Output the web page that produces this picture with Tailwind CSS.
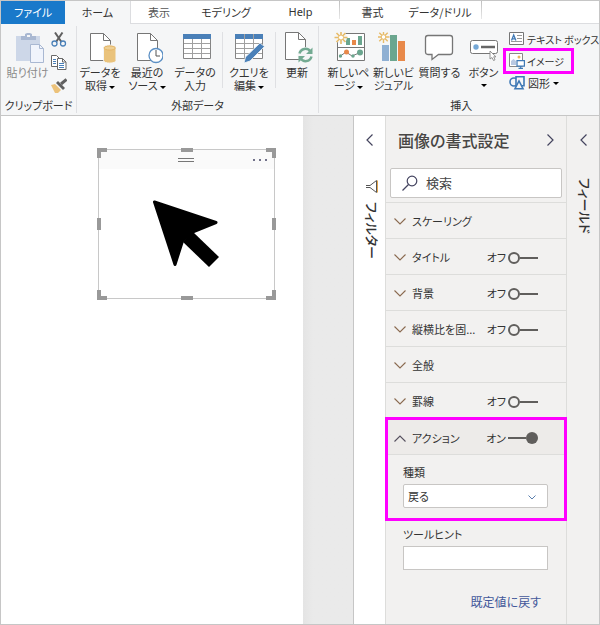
<!DOCTYPE html>
<html lang="ja">
<head>
<meta charset="utf-8">
<meta name="viewport" content="width=device-width, initial-scale=1">
<title>レポート</title>
<script src="https://cdn.jsdelivr.net/npm/@tailwindcss/browser@4"></script>
</head>
<body class="flex min-h-screen flex-col border border-[#c6c6c6] bg-white font-['Noto_Sans_CJK_JP',sans-serif] text-[11px] leading-[13px] text-[#333] [font-feature-settings:'palt'] whitespace-nowrap">

<!-- Ribbon tabs -->
<nav class="flex h-[23px] text-center leading-[22px]">
  <a href="#" class="w-16 shrink-0 bg-[#1979ca] text-white">ファイル</a>
  <a href="#" class="w-[66px] shrink-0 border-r border-[#dcdde0] bg-[#f5f6f7]">ホーム</a>
  <div class="flex grow border-b border-[#dcdde0]">
    <a href="#" class="w-14 text-[#555]">表示</a>
    <a href="#" class="w-[78px]">モデリング</a>
    <a href="#" class="w-[74px] pr-[3px] font-['Noto_Sans',sans-serif]">Help</a>
    <div class="h-[18px] w-px bg-linear-to-b from-[#c0c0c0] to-[#e8e8e8]"></div>
    <a href="#" class="w-[65px]">書式</a>
    <a href="#" class="w-[76px] pr-[6px]">データ/ドリル</a>
    <div class="h-[18px] w-px bg-linear-to-b from-[#c0c0c0] to-[#e8e8e8]"></div>
  </div>
</nav>

<!-- Ribbon -->
<header class="flex h-[92px] border-b border-[#c6c6c6] bg-[#f5f6f7] py-[2px]">
  <section class="flex w-[76px] shrink-0 flex-col border-r border-[#dfe0e3]">
    <div class="flex grow pt-[6px] pl-[5px]">
      <button class="flex w-[43px] flex-col items-center gap-[2px] text-[#8a8a8a]">
        <svg class="h-8 w-8" viewBox="0 0 32 32"><path fill="#cdd7e8" d="M4 4h24v25H4z"/><path fill="#a9b8d2" d="M9 4h4V2l2-1h3l2 1v2h4v4H9z"/><path fill="#f5f6f7" d="M15 3h3v2h-3z"/><path fill="#f0f4fc" stroke="#a9b8d2" d="M18.500 12.500h9l4 4v14h-13z"/><path fill="none" stroke="#a9b8d2" d="M27.500 12.500v4h4"/></svg>
        <span>貼り付け</span>
      </button>
      <div class="flex w-5 flex-col items-center gap-[7px]">
        <button aria-label="切り取り"><svg class="h-4 w-4" viewBox="0 0 16 16" fill="none"><path stroke="#606060" stroke-width="2" d="M4 0.500l6.500 9.500M11.500 0.500L5 10"/><circle cx="3.500" cy="11.500" r="2.500" stroke="#4a80b8" stroke-width="1.300"/><circle cx="12" cy="11.500" r="2.500" stroke="#4a80b8" stroke-width="1.300"/></svg></button>
        <button aria-label="コピー"><svg class="h-4 w-4" viewBox="0 0 16 16" fill="#fff" stroke="#686868"><path d="M.5.5h5l3 3v8h-8z"/><path stroke="#4a80b8" d="M2 4.500h3M2 6.500h3M2 8.500h3"/><path d="M6.500 3.500h5l3.500 3.500v7.500H6.500z"/><path d="M11.500 3.500V7H15" fill="none"/><path stroke="#4a80b8" d="M8 8.500h5M8 10.500h5M8 12.500h5"/></svg></button>
        <button aria-label="書式のコピー"><svg class="h-4 w-4" viewBox="0 0 16 16"><path fill="#ecc27a" d="M0 7l4-1 6 6-3 3H4z"/><path fill="#606060" d="M5 5l2-2 7 7-2 2z"/><path stroke="#606060" stroke-width="3" d="M10 6l5.500-4.500"/></svg></button>
      </div>
    </div>
    <h2 class="pb-px text-center">クリップボード</h2>
  </section>

  <section class="flex w-[242px] shrink-0 flex-col border-r border-[#dfe0e3]">
    <div class="flex grow pt-[6px]">
      <button class="flex w-[46px] flex-col items-center gap-[2px]">
        <svg class="h-8 w-8" viewBox="0 0 32 32"><path fill="#fff" stroke="#767676" d="M6.500 1.500h13l7 7v20h-20z"/><path fill="none" stroke="#767676" d="M19.500 1.500v7h7"/><path fill="#eac37c" stroke="#f5f6f7" d="M19.500 16c0-4 12.500-4 12.500 0v12.500c0 3.500-12.500 3.500-12.500 0z"/><ellipse cx="25.700" cy="16" rx="5.700" ry="2" fill="#efd093" stroke="#dfac5a" stroke-width=".7"/></svg>
        <span>データを<br>取得<svg class="ml-[2px] inline h-[3px] w-[6px] align-middle" viewBox="0 0 6 3"><path d="M0 0h6L3 3z"/></svg></span>
      </button>
      <button class="flex w-12 flex-col items-center gap-[2px]">
        <svg class="h-8 w-8" viewBox="0 0 32 32"><path fill="#fff" stroke="#767676" d="M6.500 1.500h13l7 7v20h-20z"/><path fill="none" stroke="#767676" d="M19.500 1.500v7h7"/><circle cx="25" cy="23.500" r="7" fill="#fff" stroke="#5b8fc4" stroke-width="1.300"/><path fill="none" stroke="#555" d="M25 18v6h4"/></svg>
        <span>最近の<br>ソース<svg class="ml-[2px] inline h-[3px] w-[6px] align-middle" viewBox="0 0 6 3"><path d="M0 0h6L3 3z"/></svg></span>
      </button>
      <button class="flex w-12 flex-col items-center gap-[2px]">
        <svg class="h-8 w-8" viewBox="0 0 32 32"><path fill="#fff" stroke="#858585" d="M4.500 2.500h27v24h-27z"/><path fill="#4a80b8" d="M4 2h28v5H4z"/><path fill="none" stroke="#a0a0a0" d="M5 11.500h26M5 16.500h26M5 21.500h26M13.500 7v19M22.500 7v19"/></svg>
        <span>データの<br>入力</span>
      </button>
      <div class="mx-[3px] h-14 w-px bg-[#dfe0e3]"></div>
      <button class="flex w-[46px] flex-col items-center gap-[2px]">
        <svg class="h-8 w-8" viewBox="0 0 32 32"><path fill="#fff" stroke="#858585" d="M2.500 2.500h27v24h-27z"/><path fill="#4a80b8" d="M2 2h28v5H2z"/><path fill="none" stroke="#a0a0a0" d="M3 11.500h26M3 16.500h26M3 21.500h26M11.500 2v24M20.500 2v24"/><path fill="#4a80b8" stroke="#f5f6f7" stroke-width=".8" d="M11 31l1.500-6L27 11l4.500 3.500L17 29z"/></svg>
        <span>クエリを<br>編集<svg class="ml-[2px] inline h-[3px] w-[6px] align-middle" viewBox="0 0 6 3"><path d="M0 0h6L3 3z"/></svg></span>
      </button>
      <div class="mx-[3px] h-14 w-px bg-[#dfe0e3]"></div>
      <button class="flex w-9 flex-col items-center gap-[2px]">
        <svg class="h-8 w-8" viewBox="0 0 32 32"><path fill="#fff" stroke="#767676" d="M4.500 .5h13l7 7v20h-20z"/><path fill="none" stroke="#767676" d="M17.500 .5v7h7"/><circle cx="24.500" cy="23" r="8" fill="#f5f6f7"/><path fill="none" stroke="#73aa92" stroke-width="2.500" d="M18.500 21.500c1.500-5.500 8-6 11-2M30.500 24.500c-1.500 5.500-8 6-11 2"/><path fill="#73aa92" d="M31.500 15.500v6.500h-6.500zM17.500 30.500V24H24z"/></svg>
        <span>更新</span>
      </button>
    </div>
    <h2 class="pb-px text-center">外部データ</h2>
  </section>

  <section class="flex grow flex-col">
    <div class="flex grow pt-[6px] pl-[6px]">
      <button class="flex w-[47px] flex-col items-center gap-[2px]">
        <svg class="h-8 w-8" viewBox="0 0 32 32"><path fill="#fff" stroke="#767676" d="M4.500 1.500h27v27h-27z"/><path stroke="#767676" d="M5 15.500h26"/><path fill="#6ba68f" d="M13 6h4v7h-4zM25 4h4v9h-4z"/><path fill="#e8894a" d="M19 8h4v5h-4z"/><path fill="none" stroke="#767676" d="M6 25l7-5 6 4 7-3 3-1"/><circle cx="7.500" cy="24" r="1.700" fill="#6ba68f"/><circle cx="13.500" cy="20" r="2.500" fill="#e8894a"/><circle cx="20" cy="24" r="1.700" fill="#6ba68f"/><circle cx="27" cy="20.500" r="3" fill="#6ba68f"/><circle cx="8" cy="5.500" r="6" fill="#f5f6f7"/><path stroke="#e7bb68" stroke-width="1.600" d="M8-1v13M1.500 5.500h13M3.500 1l9 9M12.500 1l-9 9"/><circle cx="8" cy="5.500" r="2.500" fill="#fff" stroke="#e7bb68"/></svg>
        <span>新しいペ<br>ージ<svg class="ml-[2px] inline h-[3px] w-[6px] align-middle" viewBox="0 0 6 3"><path d="M0 0h6L3 3z"/></svg></span>
      </button>
      <button class="flex w-[43px] flex-col items-center gap-[2px]">
        <svg class="h-8 w-8" viewBox="0 0 32 32"><path fill="#8fb0d3" d="M4 13h7v16H4z"/><path fill="#6ba68f" d="M12 3h7v26h-7z"/><path fill="#e8894a" d="M20 9h7v20h-7z"/><path stroke="#e7bb68" stroke-width="1.400" d="M5.500-1v12M0 5h11.500M1.300.8l8.400 8.400M9.700.8L1.300 9.200"/><circle cx="5.500" cy="5" r="2.300" fill="#fff" stroke="#e7bb68"/></svg>
        <span>新しいビ<br>ジュアル</span>
      </button>
      <button class="flex w-[49px] flex-col items-center gap-[2px]">
        <svg class="h-8 w-8" viewBox="0 0 32 32"><path fill="#fff" stroke="#767676" stroke-width="1.300" d="M4 3.500h22q2.500 0 2.500 2.500v14q0 2.500-2.500 2.500H14.500L8 27.500v-5H4q-2.500 0-2.500-2.500V6q0-2.500 2.500-2.500z"/></svg>
        <span>質問する</span>
      </button>
      <button class="flex w-[39px] flex-col items-center gap-[2px]">
        <svg class="h-8 w-8" viewBox="0 0 32 32"><rect x="2.500" y="8.500" width="27" height="13" rx="2" fill="#fff" stroke="#767676"/><circle cx="8" cy="15" r="2.700" fill="#74a7d6"/><path stroke="#666" stroke-width="2.500" d="M13 15h14"/><path fill="#fff" stroke="#888" stroke-width=".9" d="M22 19v8l2-1.500 1.500 3 1.500-.7-1.300-3H28z"/></svg>
        <span class="flex flex-col items-center">ボタン<svg class="mt-[5px] h-[3px] w-[6px]" viewBox="0 0 6 3"><path d="M0 0h6L3 3z"/></svg></span>
      </button>
      <div class="-mt-1 flex flex-col items-start pl-[2px]">
        <button class="flex h-[22px] items-center gap-[2px] px-1 text-[10px]"><svg class="h-4 w-4" viewBox="0 0 16 16"><path fill="#fff" stroke="#767676" d="M.5 1.500h14v12H.5z"/><path fill="none" stroke="#3f79b5" stroke-width="1.300" d="M2.500 9.500l2.200-5.500 2.200 5.500M3.200 7.800h3"/><path stroke="#999" d="M8 4.500h5M8 7.500h5M2 10.500h11"/></svg>テキスト ボックス</button>
        <button class="flex h-[22px] items-center gap-[2px] px-1 text-[10px] outline-3 -outline-offset-1 outline-[#ff00ff]"><svg class="h-4 w-4" viewBox="0 0 16 16"><path fill="#fff" stroke="#888" d="M.5.5h13v13H.5z"/><circle cx="10" cy="4" r="1.500" fill="#e9b45e"/><path fill="#b9c9e2" d="M2 12V8l2.500-2L7 8v4z"/><path fill="#fff" stroke="#3f79b5" stroke-width="1.200" d="M8 7.600h7.400v5.600H8z"/><path stroke="#3f79b5" stroke-width="1.200" d="M11.700 13v2.500M9.500 15.400h4.500"/></svg><span class="pr-1">イメージ</span></button>
        <button class="flex h-[22px] items-center gap-[3px] px-1"><svg class="h-4 w-4" viewBox="0 0 16 16"><circle cx="5" cy="7" r="4" fill="none" stroke="#3f79b5" stroke-width="1.600"/><path fill="#f5f6f7" stroke="#3f79b5" stroke-width="1.600" d="M7 1.800h8v9H7z"/><path fill="#f5f6f7" stroke="#3f79b5" stroke-width="1.600" d="M6 13.700h8L10 6z"/></svg>図形<svg class="h-[3px] w-[6px]" viewBox="0 0 6 3"><path d="M0 0h6L3 3z"/></svg></button>
      </div>
    </div>
    <h2 class="pb-px text-center">挿入</h2>
  </section>
</header>

<main class="flex grow">
  <!-- Report canvas -->
  <section class="relative grow bg-white" aria-label="キャンバス">
    <figure class="absolute top-[33px] left-[97px] h-[150px] w-[177px] border border-[#c8c8c8] bg-white">
      <div class="flex h-[19px] items-center bg-[#fafafa] pl-5">
        <svg class="mx-auto h-[6px] w-4" viewBox="0 0 16 6"><path stroke="#777" d="M0 1.500h16M0 4.500h16"/></svg>
        <button class="mr-[6px]" aria-label="その他のオプション"><svg class="h-[2px] w-[15px]" viewBox="0 0 15 2" fill="#72728a"><path d="M0 0h2v2H0zM6 0h2v2H6zM12 0h2v2h-2z"/></svg></button>
      </div>
      <svg class="mt-[30px] ml-[52px] h-[70px] w-[70px]" viewBox="0 0 70 70"><path stroke="#000" stroke-width="3" stroke-linejoin="round" d="M3.500 3L65 23.500 41.500 33 31.500 42 24 65.500z"/><path d="M32 43l10-10 26 25-10 10z"/></svg>
      <svg class="absolute -top-[2px] -left-[2px] h-[152px] w-[179px]" viewBox="0 0 179 152" fill="#999"><path d="M0 0h10v4H4v6H0zM169 0h10v10h-4V4h-6zM0 142h4v6h6v4H0zM175 142h4v10h-10v-4h6zM84 0h12v4H84zM84 148h12v4H84zM0 70h4v12H0zM175 70h4v12h-4z"/></svg>
    </figure>
  </section>
  <div class="w-[50px] shrink-0 bg-linear-to-r from-[#e4e4e4] to-[#eaeaea] to-20%"></div>

  <!-- Filters pane, collapsed -->
  <aside class="flex w-8 shrink-0 flex-col items-center border-l border-[#c6c6c6] bg-white pt-[18px]">
    <button aria-label="フィルター ペインを開く"><svg class="h-3 w-[7px]" viewBox="0 0 7 12" fill="none" stroke="#44445e" stroke-width="1.200"><path d="M6.500.5L1 6l5.500 5.500"/></svg></button>
    <svg class="mt-[34px] ml-1 h-[13px] w-3" viewBox="0 0 12 13" fill="none" stroke="#555"><path d="M0 5.500h4L10.500.5v12L4 7.500H0" /><path stroke="#e2a64e" d="M11.500.5v12"/></svg>
    <h2 class="mt-[9px] ml-1 text-[13px] leading-[18px] font-medium [text-orientation:sideways] [writing-mode:vertical-rl]">フィルター</h2>
  </aside>

  <!-- Format pane -->
  <aside class="w-[181px] shrink-0 border-l border-[#dddddb] bg-[#f2f1f0]">
    <div class="flex h-[52px] items-center justify-between pr-3 pb-1 pl-3">
      <h2 class="text-[16px] leading-5 font-medium text-[#484644]">画像の書式設定</h2>
      <button aria-label="閉じる"><svg class="h-3 w-[7px]" viewBox="0 0 7 12" fill="none" stroke="#44445e" stroke-width="1.200"><path d="M.5.5L6 6 .5 11.500"/></svg></button>
    </div>
    <label class="mx-1 mb-1 flex h-[30px] items-center gap-2 rounded-[2px] border border-[#c8c6c4] bg-white pl-[11px]">
      <svg class="h-4 w-4 shrink-0" viewBox="0 0 16 16" fill="none" stroke="#444460" stroke-width="1.200"><circle cx="10" cy="6" r="4.800"/><path d="M6.500 9.500L.5 15.500"/></svg>
      <input type="search" aria-label="検索" placeholder="検索" class="min-w-0 grow bg-transparent text-[13px] leading-4 placeholder:text-[#444] outline-none">
    </label>

    <div class="flex h-9 items-center border-t border-[#dddddb] pt-[2px] pr-7 pl-2"><button class="flex grow items-center gap-[6px]"><svg class="h-[7px] w-3" viewBox="0 0 12 7" fill="none" stroke="#8a6a50" stroke-width="1.100"><path d="M.5.5L6 6 11.500.5"/></svg>スケーリング</button></div>
    <div class="flex h-9 items-center border-t border-[#dddddb] pt-[2px] pr-7 pl-2"><button class="flex grow items-center gap-[6px]"><svg class="h-[7px] w-3" viewBox="0 0 12 7" fill="none" stroke="#8a6a50" stroke-width="1.100"><path d="M.5.5L6 6 11.500.5"/></svg>タイトル</button>
      <label class="flex items-center gap-[2px]">オフ<input type="checkbox" class="flex h-3 w-[30px] appearance-none items-center before:h-3 before:w-3 before:rounded-full before:border-2 before:border-[#605e5c] after:h-[2px] after:grow after:bg-[#605e5c]"></label></div>
    <div class="flex h-9 items-center border-t border-[#dddddb] pt-[2px] pr-7 pl-2"><button class="flex grow items-center gap-[6px]"><svg class="h-[7px] w-3" viewBox="0 0 12 7" fill="none" stroke="#8a6a50" stroke-width="1.100"><path d="M.5.5L6 6 11.500.5"/></svg>背景</button>
      <label class="flex items-center gap-[2px]">オフ<input type="checkbox" class="flex h-3 w-[30px] appearance-none items-center before:h-3 before:w-3 before:rounded-full before:border-2 before:border-[#605e5c] after:h-[2px] after:grow after:bg-[#605e5c]"></label></div>
    <div class="flex h-9 items-center border-t border-[#dddddb] pt-[2px] pr-7 pl-2"><button class="flex grow items-center gap-[6px]"><svg class="h-[7px] w-3" viewBox="0 0 12 7" fill="none" stroke="#8a6a50" stroke-width="1.100"><path d="M.5.5L6 6 11.500.5"/></svg>縦横比を固...</button>
      <label class="flex items-center gap-[2px]">オフ<input type="checkbox" class="flex h-3 w-[30px] appearance-none items-center before:h-3 before:w-3 before:rounded-full before:border-2 before:border-[#605e5c] after:h-[2px] after:grow after:bg-[#605e5c]"></label></div>
    <div class="flex h-9 items-center border-t border-[#dddddb] pt-[2px] pr-7 pl-2"><button class="flex grow items-center gap-[6px]"><svg class="h-[7px] w-3" viewBox="0 0 12 7" fill="none" stroke="#8a6a50" stroke-width="1.100"><path d="M.5.5L6 6 11.500.5"/></svg>全般</button></div>
    <div class="flex h-9 items-center border-t border-[#dddddb] pt-[2px] pr-7 pl-2"><button class="flex grow items-center gap-[6px]"><svg class="h-[7px] w-3" viewBox="0 0 12 7" fill="none" stroke="#8a6a50" stroke-width="1.100"><path d="M.5.5L6 6 11.500.5"/></svg>罫線</button>
      <label class="flex items-center gap-[2px]">オフ<input type="checkbox" class="flex h-3 w-[30px] appearance-none items-center before:h-3 before:w-3 before:rounded-full before:border-2 before:border-[#605e5c] after:h-[2px] after:grow after:bg-[#605e5c]"></label></div>

    <div class="relative pb-3 outline-3 -outline-offset-2 outline-[#ff00ff]">
      <div class="flex h-[37px] items-center border-b border-[#dddddb] bg-[#edebe9] pt-1 pr-7 pl-2"><button class="flex grow items-center gap-[6px]"><svg class="h-[7px] w-3" viewBox="0 0 12 7" fill="none" stroke="#554f5e" stroke-width="1.100"><path d="M.5 6.500L6 1l5.500 5.500"/></svg>アクション</button>
        <label class="flex items-center gap-[2px]">オン<input type="checkbox" checked class="flex h-3 w-[30px] appearance-none items-center before:h-[2px] before:grow before:bg-[#605e5c] after:h-3 after:w-3 after:rounded-full after:bg-[#605e5c]"></label></div>
      <div class="px-[17px] pt-[9px]">
        <label for="kind" class="block leading-4">種類</label>
        <div class="relative mt-1 w-[145px]">
          <select id="kind" class="block h-6 w-full appearance-none rounded-[2px] border border-[#c8c6c4] bg-white pl-1 leading-4"><option>戻る</option></select>
          <svg class="pointer-events-none absolute top-[11px] right-3 h-[5px] w-2" viewBox="0 0 8 5" fill="none" stroke="#5a7fae"><path d="M.5.5L4 4 7.500.5"/></svg>
        </div>
      </div>
    </div>
    <div class="px-[17px] pt-[6px]">
      <label for="tip" class="block leading-4">ツールヒント</label>
      <input id="tip" type="text" class="mt-1 block h-6 w-[145px] border border-[#c8c6c4] bg-white px-1">
    </div>
    <div class="mt-6 pr-[25px] text-right"><a href="#" class="text-[12px] leading-4 text-[#42589a]">既定値に戻す</a></div>
  </aside>

  <!-- Fields pane, collapsed -->
  <aside class="flex w-[33px] shrink-0 flex-col items-center border-l border-[#dddddb] bg-[#f2f1f0] pt-[18px]">
    <button aria-label="フィールド ペインを開く"><svg class="h-3 w-[7px]" viewBox="0 0 7 12" fill="none" stroke="#44445e" stroke-width="1.200"><path d="M6.500.5L1 6l5.500 5.500"/></svg></button>
    <h2 class="mt-[32px] ml-1 text-[13px] leading-[18px] font-medium [text-orientation:sideways] [writing-mode:vertical-rl]">フィールド</h2>
  </aside>
</main>
</body>
</html>
